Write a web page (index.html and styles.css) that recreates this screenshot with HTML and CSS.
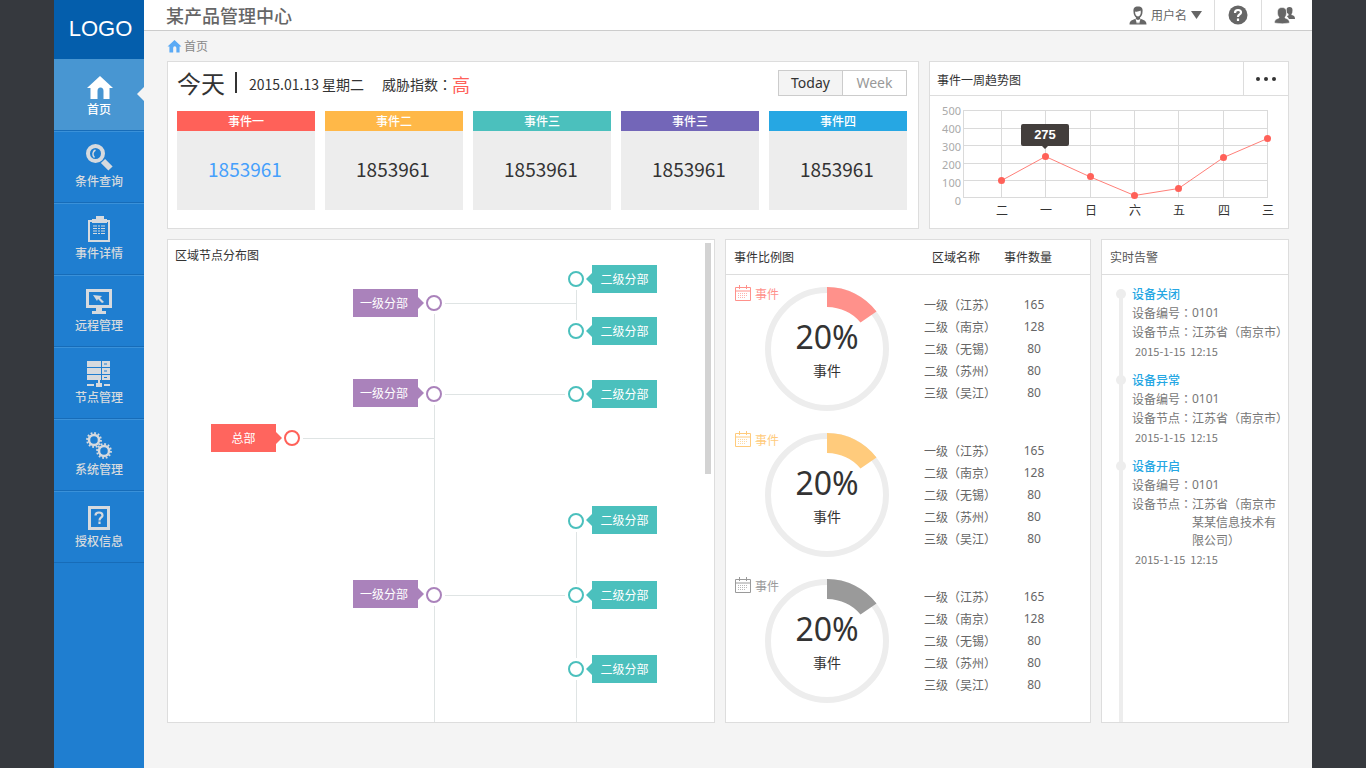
FILE: index.html
```html
<!DOCTYPE html>
<html lang="zh-CN">
<head>
<meta charset="utf-8">
<title>某产品管理中心</title>
<link rel="stylesheet" href="styles.css">
</head>
<body>
<svg class="defs" aria-hidden="true">
  <defs>
    <symbol id="home" viewBox="0 0 28 24"><path d="M14 0 1 12h3.500v11h7v-8q0-3.500 3-3.500t3 3.500v8h6V12H27z"/></symbol>
    <symbol id="calendar" viewBox="0 0 16 16"><path d="M.5 2.500h15v13H.5zM.5 6h15M4.500 0v4M11.500 0v4" fill="none" stroke="currentColor"/><path d="M3 8.500h10M3 10.500h10M3 12.500h8" fill="none" stroke="currentColor" stroke-dasharray="1 1" opacity=".7"/></symbol>
    <symbol id="ring" viewBox="0 0 124 124"><circle cx="62" cy="62" r="59" fill="none" stroke="#ededed" stroke-width="6"/><path d="M62 0A62 62 0 0 1 111.500 24.500L95.500 35.500Q83 20.500 62 20z"/></symbol>
    <symbol id="gear" viewBox="0 0 16 16"><circle cx="8" cy="8" r="5" fill="none" stroke="currentColor" stroke-width="2.500"/><circle cx="8" cy="8" r="6.900" fill="none" stroke="currentColor" stroke-width="2" stroke-dasharray="1.800 1.813"/></symbol>
  </defs>
</svg>
<div class="shell">
  <aside class="sidebar">
    <div class="logo">LOGO</div>
    <nav class="nav">
      <a class="nav-item active" href="#"><svg class="nav-icon" viewBox="0 0 28 28"><use href="#home" x="1" y="4" width="28" height="24"/></svg>首页</a>
      <a class="nav-item" href="#"><svg class="nav-icon" viewBox="0 0 28 28"><circle cx="10.500" cy="9.500" r="7.500" fill="none" stroke="currentColor" stroke-width="4"/><path d="M10.500 6a4.500 4.500 0 0 0-1 7.500" fill="none" stroke="currentColor" stroke-width="1.500"/><path d="m18 17 7.500 7.500" stroke="currentColor" stroke-width="6"/></svg>条件查询</a>
      <a class="nav-item" href="#"><svg class="nav-icon" viewBox="0 0 28 28"><path d="M3 4h4v2H5v18h18V6h-2V4h4v22H3zM7 7V3h4V0h8v3h3v4z"/><path d="M8 10h13M8 12.500h13M8 15h13M8 17.500h13" stroke="currentColor" stroke-dasharray="4 1 2 1"/></svg>事件详情</a>
      <a class="nav-item" href="#"><svg class="nav-icon" viewBox="0 0 28 28"><path d="M1 1h26v19H17v3h4v3H7v-3h4v-3H1zm3 3v13h20V4z" fill-rule="evenodd"/><path d="m8 7 9 1-2 2 4 4-2 1-4-4-1 2z"/></svg>远程管理</a>
      <a class="nav-item" href="#"><svg class="nav-icon" viewBox="0 0 28 28"><path d="M2 1h14v6H2zM17 1h8v6h-8zM2 8h14v6H2zM17 8h8v6h-8zM2 15h14v5H2zM17 15h8v5h-8zM13 20h2v3h2v4h-6v-4h2zM2 24h7v2H2zM19 24h6v2h-6z"/><path d="M19 4h3M19 11h3M19 17.500h3" stroke="#1f7ed0"/></svg>节点管理</a>
      <a class="nav-item" href="#"><svg class="nav-icon" viewBox="0 0 28 28"><use href="#gear" x="1" y="0" width="16" height="16"/><use href="#gear" x="11" y="11" width="16" height="16"/></svg>系统管理</a>
      <a class="nav-item" href="#"><svg class="nav-icon" viewBox="0 0 28 28"><path d="M4.500 3.500h19v21h-19z" fill="none" stroke="currentColor" stroke-width="3"/><path d="M10.500 11.500q0-3 3.500-3t3.500 3c0 2-3 2-3 5m0 1v2.500" fill="none" stroke="currentColor" stroke-width="2.200"/></svg>授权信息</a>
    </nav>
  </aside>
  <div class="page">
    <header class="topbar">
      <h1 class="title">某产品管理中心</h1>
      <button class="tool user" type="button">
        <svg width="18" height="19" viewBox="0 0 18 19"><path d="M4.500 6C4 2 5.500.5 9 .5S14 2 13.500 6c0 3-1.500 4.500-2.500 5.500v1c2 1.500 6.500 1 6.500 6H.5c0-5 4.500-4.500 6.500-6v-1C6 10.500 4.500 9 4.500 6"/><path d="M6 5.500c2 .5 4 0 5.500-1 1 2.500-.5 6-2.500 6s-3-2.500-3-5M6.500 13 9 14l2.500-1-1.500 5-1-2-1 2z" fill="#fff"/></svg>
        <span>用户名</span>
        <svg width="11" height="8" viewBox="0 0 11 8"><path d="M0 0h11L5.500 8z"/></svg>
      </button>
      <button class="tool help" type="button" aria-label="帮助"><svg width="20" height="20" viewBox="0 0 20 20"><circle cx="10" cy="10" r="9.500"/><path d="M7 8q0-3 3-3t3 2.500c0 2-3 2-3 4.500m0 1.500V16" fill="none" stroke="#fff" stroke-width="2.200"/></svg></button>
      <button class="tool people" type="button" aria-label="用户组"><svg width="21" height="17" viewBox="0 0 21 17"><path d="M12.500 3q0-3 3-3t3 3-1 4v1c1.500.5 3.500.5 3.500 4h-6c-1-2-2-2.500-2-3l1.500-.5V7q-2-1-2-4"/><path d="M3.500 5C3.500 2 5 .500 8 .500s4.500 1.500 4.500 4.500-.500 4-1.500 5v1c2 1 4.500 1 4.500 5q-7 1.500-15 0c0-4 2.500-4 4.500-5v-1C4 9 3.500 8 3.500 5" stroke="#fff" stroke-width=".5"/></svg></button>
    </header>
    <main class="content">
      <nav class="crumb"><svg width="15" height="13"><use href="#home"/></svg><a href="#">首页</a></nav>
      <div class="row row-top">
        <section class="card summary">
          <div class="summary-head">
            <h2 class="today">今天</h2><i class="bar"></i>
            <p class="date">2015.01.13 星期二</p>
            <p class="threat">威胁指数<i class="mid" lang="zh-TW">：</i><strong>高</strong></p>
            <div class="toggle"><button class="on" type="button">Today</button><button type="button">Week</button></div>
          </div>
          <div class="stats">
            <article class="stat red"><h3>事件一</h3><p>1853961</p></article>
            <article class="stat orange"><h3>事件二</h3><p>1853961</p></article>
            <article class="stat teal"><h3>事件三</h3><p>1853961</p></article>
            <article class="stat violet"><h3>事件三</h3><p>1853961</p></article>
            <article class="stat blue"><h3>事件四</h3><p>1853961</p></article>
          </div>
        </section>
        <section class="card">
          <div class="card-head trend-head"><h2>事件一周趋势图</h2><button class="more" type="button" aria-label="更多"><svg width="22" height="4" viewBox="0 0 22 4"><circle cx="3" cy="2" r="2"/><circle cx="11" cy="2" r="2"/><circle cx="19" cy="2" r="2"/></svg></button></div>
          <svg class="chart" viewBox="0 0 358 132">
            <path class="grid" d="M33.500 14v88M71.500 14v88M115.500 14v88M160.500 14v88M204.500 14v88M248.500 14v88M293.500 14v88M337.500 14v88M33 14.500h305M33 32.500h305M33 49.500h305M33 67.500h305M33 84.500h305M33 101.500h305"/>
            <g class="y-labels"><text x="31" y="19">500</text><text x="31" y="37">400</text><text x="31" y="55">300</text><text x="31" y="73">200</text><text x="31" y="91">100</text><text x="31" y="109">0</text></g>
            <g class="x-labels"><text x="72" y="119">二</text><text x="116" y="119">一</text><text x="161" y="119">日</text><text x="205" y="119">六</text><text x="249" y="119">五</text><text x="294" y="119">四</text><text x="338" y="119">三</text></g>
            <path class="trend" d="M71.500 84.500 115.500 60.500 160.500 81 204.500 99.500 248.500 92.500 293.500 61.500 337.500 42.500"/>
            <g class="points"><circle cx="71.500" cy="84.500" r="3.500"/><circle cx="115.500" cy="60.500" r="3.500"/><circle cx="160.500" cy="80.500" r="3.500"/><circle cx="204.500" cy="99.500" r="3.500"/><circle cx="248.500" cy="92.500" r="3.500"/><circle cx="293.500" cy="61.500" r="3.500"/><circle cx="337.500" cy="42.500" r="3.500"/></g>
            <path class="tip" d="M93 28h44q2 0 2 2v18q0 2-2 2h-19l-3 3-3-3H93q-2 0-2-2V30q0-2 2-2"/>
            <text class="tip-text" x="115" y="43">275</text>
          </svg>
        </section>
      </div>
      <div class="row row-bottom">
        <section class="card tree-card">
          <h2 class="tree-title">区域节点分布图</h2>
          <div class="tree">
            <svg class="links" width="536" height="482" viewBox="0 0 536 482">
              <path class="link" d="M266.500 74v68M266.500 165v179M266.500 366v116M277 63.500h132M277 154.500h120M135 198.500h131M277 355.500h120M408.500 50v30M408.500 292v52M408.500 366v52M408.500 440v42"/>
              <g class="c-root"><circle cx="124" cy="198" r="7"/></g>
              <g class="c-first"><circle cx="266" cy="63" r="7"/><circle cx="266" cy="154" r="7"/><circle cx="266" cy="355" r="7"/></g>
              <g class="c-second"><circle cx="408" cy="39" r="7"/><circle cx="408" cy="91" r="7"/><circle cx="408" cy="154" r="7"/><circle cx="408" cy="281" r="7"/><circle cx="408" cy="355" r="7"/><circle cx="408" cy="429" r="7"/></g>
            </svg>
            <span class="tag root n1">总部</span>
            <span class="tag first n2">一级分部</span><span class="tag first n3">一级分部</span><span class="tag first n4">一级分部</span>
            <span class="tag second n5">二级分部</span><span class="tag second n6">二级分部</span><span class="tag second n7">二级分部</span><span class="tag second n8">二级分部</span><span class="tag second n9">二级分部</span><span class="tag second n10">二级分部</span>
          </div>
          <i class="scroll-thumb"></i>
        </section>
        <section class="card">
          <div class="card-head ratio-head"><h2>事件比例图</h2><span id="area">区域名称</span><span id="count">事件数量</span></div>
          <div class="groups">
            <div class="group g-red"><div class="kind"><svg width="16" height="16"><use href="#calendar"/></svg>事件</div>
              <div class="ring"><svg width="124" height="124"><use href="#ring"/></svg><div class="ring-text"><b>20%</b><span>事件</span></div></div>
              <table aria-labelledby="area count"><tr><td>一级<i class="mid" lang="zh-TW">（</i>江苏<i class="mid" lang="zh-TW">）</i></td><td>165</td></tr><tr><td>二级<i class="mid" lang="zh-TW">（</i>南京<i class="mid" lang="zh-TW">）</i></td><td>128</td></tr><tr><td>二级<i class="mid" lang="zh-TW">（</i>无锡<i class="mid" lang="zh-TW">）</i></td><td>80</td></tr><tr><td>二级<i class="mid" lang="zh-TW">（</i>苏州<i class="mid" lang="zh-TW">）</i></td><td>80</td></tr><tr><td>三级<i class="mid" lang="zh-TW">（</i>吴江<i class="mid" lang="zh-TW">）</i></td><td>80</td></tr></table></div>
            <div class="group g-orange"><div class="kind"><svg width="16" height="16"><use href="#calendar"/></svg>事件</div>
              <div class="ring"><svg width="124" height="124"><use href="#ring"/></svg><div class="ring-text"><b>20%</b><span>事件</span></div></div>
              <table aria-labelledby="area count"><tr><td>一级<i class="mid" lang="zh-TW">（</i>江苏<i class="mid" lang="zh-TW">）</i></td><td>165</td></tr><tr><td>二级<i class="mid" lang="zh-TW">（</i>南京<i class="mid" lang="zh-TW">）</i></td><td>128</td></tr><tr><td>二级<i class="mid" lang="zh-TW">（</i>无锡<i class="mid" lang="zh-TW">）</i></td><td>80</td></tr><tr><td>二级<i class="mid" lang="zh-TW">（</i>苏州<i class="mid" lang="zh-TW">）</i></td><td>80</td></tr><tr><td>三级<i class="mid" lang="zh-TW">（</i>吴江<i class="mid" lang="zh-TW">）</i></td><td>80</td></tr></table></div>
            <div class="group g-gray"><div class="kind"><svg width="16" height="16"><use href="#calendar"/></svg>事件</div>
              <div class="ring"><svg width="124" height="124"><use href="#ring"/></svg><div class="ring-text"><b>20%</b><span>事件</span></div></div>
              <table aria-labelledby="area count"><tr><td>一级<i class="mid" lang="zh-TW">（</i>江苏<i class="mid" lang="zh-TW">）</i></td><td>165</td></tr><tr><td>二级<i class="mid" lang="zh-TW">（</i>南京<i class="mid" lang="zh-TW">）</i></td><td>128</td></tr><tr><td>二级<i class="mid" lang="zh-TW">（</i>无锡<i class="mid" lang="zh-TW">）</i></td><td>80</td></tr><tr><td>二级<i class="mid" lang="zh-TW">（</i>苏州<i class="mid" lang="zh-TW">）</i></td><td>80</td></tr><tr><td>三级<i class="mid" lang="zh-TW">（</i>吴江<i class="mid" lang="zh-TW">）</i></td><td>80</td></tr></table></div>
          </div>
        </section>
        <section class="card alerts-card">
          <div class="card-head"><h2 class="soft">实时告警</h2></div>
          <div class="alerts">
            <article class="alert"><h3>设备关闭</h3>
              <p><span>设备编号<i class="mid" lang="zh-TW">：</i></span><span class="num">0101</span></p>
              <p><span>设备节点<i class="mid" lang="zh-TW">：</i></span><span>江苏省<i class="mid" lang="zh-TW">（</i>南京市<i class="mid" lang="zh-TW">）</i></span></p>
              <time>2015-1-15&nbsp; 12:15</time></article>
            <article class="alert"><h3>设备异常</h3>
              <p><span>设备编号<i class="mid" lang="zh-TW">：</i></span><span class="num">0101</span></p>
              <p><span>设备节点<i class="mid" lang="zh-TW">：</i></span><span>江苏省<i class="mid" lang="zh-TW">（</i>南京市<i class="mid" lang="zh-TW">）</i></span></p>
              <time>2015-1-15&nbsp; 12:15</time></article>
            <article class="alert"><h3>设备开启</h3>
              <p><span>设备编号<i class="mid" lang="zh-TW">：</i></span><span class="num">0101</span></p>
              <p><span>设备节点<i class="mid" lang="zh-TW">：</i></span><span>江苏省<i class="mid" lang="zh-TW">（</i>南京市<br>某某信息技术有<br>限公司<i class="mid" lang="zh-TW">）</i></span></p>
              <time>2015-1-15&nbsp; 12:15</time></article>
          </div>
        </section>
      </div>
    </main>
  </div>
</div>
</body>
</html>
```
FILE: styles.css
```css
* { box-sizing: border-box; margin: 0; padding: 0; }
body {
  background: #36393e;
  color: #333;
  font: 12px/18px "Noto Sans CJK SC", sans-serif;
  text-spacing-trim: space-all;
}
a { color: inherit; text-decoration: none; }
button { font: inherit; color: inherit; background: none; border: 0; cursor: pointer; }
h1, h2, h3 { font-size: 12px; font-weight: 400; }
i { font-style: normal; }
svg { display: block; fill: currentColor; }
.defs { position: absolute; width: 0; height: 0; }
/* Full-width punctuation centred in its box */
.mid { display: inline-block; font-family: "Noto Sans CJK TC", sans-serif; }
.num { font-family: "Noto Sans", sans-serif; }

.shell { display: flex; min-height: 100vh; margin: 0 54px; background: #f4f4f4; }
.sidebar { flex: 0 0 90px; background: #1f7ed0; }
.logo {
  height: 59px;
  padding-left: 3px;
  background: #045eac;
  color: #fff;
  font: 22px/58px "Liberation Sans", sans-serif;
  text-align: center;
}
.nav-item {
  position: relative;
  display: flex;
  flex-direction: column;
  align-items: center;
  height: 72px;
  padding-top: 12px;
  border-top: 1px solid #3a91d9;
  border-bottom: 1px solid #176cb8;
  color: #d6dade;
  font-weight: 500;
}
.nav-icon { width: 28px; height: 28px; }
.nav-item.active { background: #4896d2; border-top-color: #4896d2; color: #fff; }
.nav-item.active::after {
  content: "";
  position: absolute;
  right: 0;
  top: 27px;
  border: 7px solid transparent;
  border-left: 0;
  border-right-color: #f4f4f4;
}

.page { flex: 1; min-width: 0; }
.topbar {
  display: flex;
  height: 31px;
  padding-left: 22px;
  background: #fff;
  border-bottom: 1px solid #ccc;
  color: #666;
}
.title { flex: 1; font-size: 18px; font-weight: 500; line-height: 30px; }
.tool { display: flex; align-items: center; justify-content: center; }
.user { gap: 4px; padding-right: 12px; }
.help { width: 48px; border: 1px solid #ddd; border-width: 0 1px; }
.people { width: 50px; padding-right: 6px; }

.content { padding: 0 23px 45px; }
.crumb { display: flex; align-items: center; gap: 2px; height: 30px; color: #888; }
.crumb svg { color: #5aaaf5; }
.row { display: grid; gap: 10px; }
.row-top { grid-template-columns: minmax(0, 752fr) minmax(0, 360fr); margin-bottom: 10px; }
.row-bottom { grid-template-columns: minmax(0, 548fr) minmax(0, 366fr) minmax(0, 188fr); }
.card { position: relative; background: #fff; border: 1px solid #ddd; }
.card-head {
  display: flex;
  align-items: center;
  height: 35px;
  padding-left: 8px;
  border-bottom: 1px solid #ddd;
}
.soft { color: #555; }

.summary { padding: 0 11px 18px 9px; }
.summary-head { display: flex; align-items: center; height: 49px; padding-bottom: 8px; font-size: 14px; }
.today { font-size: 24px; line-height: 30px; }
.bar { width: 2px; height: 21px; margin: 0 12px 0 10px; background: #333; }
.date { margin-right: 18px; padding-top: 2px; }
.threat { display: flex; flex: 1; align-items: center; padding-top: 2px; }
.threat strong { color: #ff6159; font-size: 18px; font-weight: 400; }
.toggle { display: flex; border: 1px solid #ccc; font-family: "Noto Sans", sans-serif; }
.toggle button { width: 63px; height: 24px; color: #999; line-height: 22px; }
.toggle .on { width: 64px; background: #f4f4f4; border-right: 1px solid #ccc; color: #333; }
.stats { display: grid; grid-template-columns: repeat(5, 1fr); gap: 10px; text-align: center; }
.stat h3 { color: #fff; font-weight: 500; line-height: 20px; }
.stat p { padding: 0 2px 3px 0; background: #ededed; font-size: 19px; line-height: 76px; }
.red h3 { background: #ff6159; }
.red p { color: #46a0fc; }
.orange h3 { background: #ffb848; }
.teal h3 { background: #4bc0bd; }
.violet h3 { background: #7366b8; }
.blue h3 { background: #26a7e3; }

.trend-head { height: 34px; padding-left: 7px; }
.trend-head h2 { flex: 1; padding-top: 3px; }
.more { display: grid; place-items: center; width: 45px; height: 33px; border-left: 1px solid #ddd; }
.chart { width: 100%; height: auto; font-size: 12px; }
.grid { stroke: #dadada; }
.y-labels { fill: #aaa; font-family: "Noto Sans", sans-serif; font-size: 11px; text-anchor: end; }
.x-labels { text-anchor: middle; }
.trend { fill: none; stroke: #ff8079; }
.points { fill: #ff6159; }
.tip { fill: #433e3c; }
.tip-text { fill: #fff; font: bold 13px "Liberation Sans", sans-serif; text-anchor: middle; }

.tree-card { overflow: hidden; }
.tree-title { position: absolute; left: 7px; top: 6px; }
.tree { position: relative; width: 536px; height: 482px; }
.link { fill: none; stroke: #dfe4e4; }
.links circle { fill: #fff; stroke: currentColor; stroke-width: 2; }
.c-root { color: #ff6159; }
.c-first { color: #aa82bb; }
.c-second { color: #4bc0bd; }
.tag { position: absolute; width: 65px; color: #fff; line-height: 28px; text-align: center; }
.tag::after { content: ""; position: absolute; top: 8px; border: 6px solid transparent; }
.root { background: #ff655e; }
.first { left: 185px; padding-right: 3px; background: #aa82bb; }
.second { left: 424px; background: #4bc0bd; }
.root::after, .first::after { left: 65px; border-right: 0; }
.root::after { border-left-color: #ff655e; }
.first::after { border-left-color: #aa82bb; }
.second::after { right: 65px; border-left: 0; border-right-color: #4bc0bd; }
.n1 { left: 43px; top: 184px; }
.n2 { top: 49px; }
.n3 { top: 139px; }
.n4 { top: 340px; }
.n5 { top: 25px; }
.n6 { top: 77px; }
.n7 { top: 140px; }
.n8 { top: 266px; }
.n9 { top: 341px; }
.n10 { top: 415px; }
.scroll-thumb { position: absolute; right: 3px; top: 3px; width: 6px; height: 231px; background: #d3d3d3; }

.ratio-head h2 { flex: 1; }
.ratio-head span { width: 72px; }
.ratio-head span:last-child { width: 86px; }
.groups { display: grid; gap: 22px; padding: 12px 0; }
.group { display: flex; align-items: center; justify-content: space-between; padding-right: 32px; color: #666; }
.kind { position: absolute; left: 9px; display: flex; gap: 4px; align-self: flex-start; margin-top: -2px; }
.ring { position: relative; margin-left: 39px; }
.ring-text { position: absolute; inset: 0; display: flex; flex-direction: column; align-items: center; padding-top: 31px; color: #333; }
.ring-text b { font: 32px/38px "Noto Sans", sans-serif; }
.ring-text span { margin-top: 5px; font-size: 14px; }
.g-red .ring, .g-red .kind { color: #ff918b; }
.g-orange .ring, .g-orange .kind { color: #ffcb7c; }
.g-gray .ring, .g-gray .kind { color: #9a9a9a; }
.group table { border-collapse: collapse; line-height: 22px; }
.group td:first-child { width: 86px; }
.group td:last-child { width: 48px; font-family: "Noto Sans", sans-serif; text-align: center; }

.alerts-card { display: flex; flex-direction: column; }
.alerts { position: relative; flex: 1; padding: 9px 0 0 30px; color: #777; }
.alerts::before { content: ""; position: absolute; left: 17px; top: 19px; bottom: 0; width: 4px; background: #ededed; }
.alert { position: relative; margin-bottom: 10px; line-height: 18px; }
.alert::before { content: ""; position: absolute; left: -16px; top: 5px; width: 10px; height: 10px; border-radius: 50%; background: #ededed; }
.alert h3 { color: #26a7e3; font-weight: 500; line-height: 20px; }
.alert p { display: flex; margin-bottom: 1px; white-space: nowrap; }
.alert p span:first-child { width: 60px; }
.alert time { display: block; padding-left: 3px; font-size: 11px; }
```
